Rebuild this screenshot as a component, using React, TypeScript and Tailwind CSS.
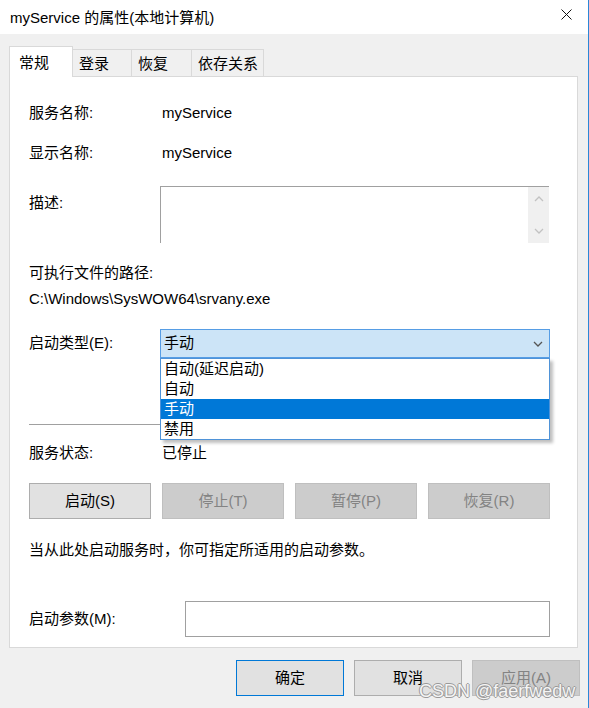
import React from "react";

const font = "font-['Liberation_Sans','Noto_Sans_CJK_SC',sans-serif]";

const tabs = [
  { label: "常规", w: "w-[64px]", active: true },
  { label: "登录", w: "w-[59px]", active: false },
  { label: "恢复", w: "w-[60px]", active: false },
  { label: "依存关系", w: "w-[72px]", active: false },
];

const options = ["自动(延迟启动)", "自动", "手动", "禁用"];

const actions = [
  { label: "启动(S)", enabled: true },
  { label: "停止(T)", enabled: false },
  { label: "暂停(P)", enabled: false },
  { label: "恢复(R)", enabled: false },
];

function Chevron({ up, className }: { up?: boolean; className?: string }) {
  return (
    <svg width="10" height="6" viewBox="0 0 10 6" className={className}>
      <polyline
        points={up ? "1,5 5,1 9,5" : "1,1 5,5 9,1"}
        fill="none"
        stroke="currentColor"
        strokeWidth="1.3"
      />
    </svg>
  );
}

function Field({ label, value }: { label: string; value: string }) {
  return (
    <div className="flex h-[20px] items-center leading-[20px]">
      <span className="w-[131px]">{label}</span>
      <span className="pl-[2px]">{value}</span>
    </div>
  );
}

function StartupCombo() {
  return (
    <div className="relative h-[29px] w-[390px]">
      <div className="flex h-full items-center justify-between border border-[#569de5] bg-[#cce4f7] pl-[3px] pr-[6px]">
        <span>手动</span>
        <Chevron className="text-[#555]" />
      </div>
      <ul className="absolute left-0 top-full z-10 w-full border border-[#4f93d8] bg-white shadow-[3px_3px_3px_rgba(0,0,0,0.25)]">
        {options.map((o) => (
          <li
            key={o}
            className={
              o === "手动"
                ? "h-[20px] bg-[#0078d7] pl-[3px] leading-[20px] text-white"
                : "h-[20px] pl-[3px] leading-[20px]"
            }
          >
            {o}
          </li>
        ))}
      </ul>
    </div>
  );
}

export default function App() {
  return (
    <div
      className={`${font} relative flex h-[708px] w-[589px] flex-col border-r border-[#2b88d8] bg-[#f0f0f0] text-[15px] text-black`}
    >
      {/* title bar */}
      <div className="flex h-[34px] items-center justify-between bg-white pl-[10px] pr-[16px]">
        <span className="pt-[2px]">myService 的属性(本地计算机)</span>
        <svg width="11" height="11" viewBox="0 0 11 11" className="-mt-[6px]">
          <path d="M0.5 0.5 L10.5 10.5 M10.5 0.5 L0.5 10.5" stroke="#111" strokeWidth="1" />
        </svg>
      </div>

      {/* tabs */}
      <div className="relative z-10 mt-[12px] flex items-start pl-[9px]">
        {tabs.map((t) =>
          t.active ? (
            <div
              key={t.label}
              className={`${t.w} h-[31px] border-x border-t border-[#d9d9d9] bg-white pl-[9px] pt-[5px]`}
            >
              {t.label}
            </div>
          ) : (
            <div
              key={t.label}
              className={`${t.w} mt-[3px] h-[27px] border-r border-t border-[#d9d9d9] bg-[#f0f0f0] pl-[6px] pt-[3px]`}
            >
              {t.label}
            </div>
          )
        )}
      </div>

      {/* page */}
      <div className="-mt-px ml-[9px] flex h-[572px] w-[569px] flex-col border border-[#d9d9d9] bg-white pl-[19px] pr-[27px]">
        <div className="mt-[26px]">
          <Field label="服务名称:" value="myService" />
        </div>
        <div className="mt-[20px]">
          <Field label="显示名称:" value="myService" />
        </div>

        <div className="mt-[23px] flex items-start">
          <span className="mt-[7px] w-[131px] leading-[20px]">描述:</span>
          <div className="flex h-[57px] w-[389px] justify-end border-l border-t border-[#a0a0a0] bg-white">
            <div className="flex w-[21px] flex-col items-center justify-between bg-[#f0f0f0] py-[9px] text-[#c2c2c2]">
              <Chevron up />
              <Chevron />
            </div>
          </div>
        </div>

        <div className="mt-[20px] h-[20px] leading-[20px]">可执行文件的路径:</div>
        <div className="mt-[6px] h-[20px] leading-[20px]">C:\Windows\SysWOW64\srvany.exe</div>

        <div className="mt-[20px] flex items-center">
          <span className="w-[131px]">启动类型(E):</span>
          <StartupCombo />
        </div>

        <div className="mt-[66px] h-px w-[520px] bg-[#a0a0a0]" />

        <div className="mt-[18px]">
          <Field label="服务状态:" value="已停止" />
        </div>

        <div className="mt-[20px] flex justify-between">
          {actions.map((a) => (
            <div
              key={a.label}
              className={
                a.enabled
                  ? "flex h-[36px] w-[122px] items-center justify-center border border-[#adadad] bg-[#e1e1e1]"
                  : "flex h-[36px] w-[122px] items-center justify-center border border-[#bfbfbf] bg-[#cccccc] text-[#838383]"
              }
            >
              {a.label}
            </div>
          ))}
        </div>

        <div className="mt-[21px] h-[20px] leading-[20px]">
          当从此处启动服务时，你可指定所适用的启动参数。
        </div>

        <div className="mt-[41px] flex h-[36px] items-center justify-between">
          <span>启动参数(M):</span>
          <div className="h-full w-[365px] border border-[#a0a0a0] bg-white" />
        </div>
      </div>

      {/* dialog buttons */}
      <div className="mt-[12px] flex justify-end gap-[10px] pr-[8px]">
        <div className="flex h-[36px] w-[108px] items-center justify-center border border-[#0078d7] bg-[#e1e1e1]">
          确定
        </div>
        <div className="flex h-[36px] w-[108px] items-center justify-center border border-[#adadad] bg-[#e1e1e1]">
          取消
        </div>
        <div className="flex h-[36px] w-[108px] items-center justify-center border border-[#bfbfbf] bg-[#cccccc] text-[#838383]">
          应用(A)
        </div>
      </div>

      {/* watermark */}
      <span className="absolute left-[419px] top-[680px] font-['Liberation_Sans',sans-serif] text-[18px] leading-[22px] text-[#f4f4f4] [text-shadow:1px_0_0_#9a9a9a,-1px_0_0_#9a9a9a,0_1px_0_#9a9a9a,0_-1px_0_#9a9a9a]">
        CSDN @faerfwedw
      </span>
    </div>
  );
}
